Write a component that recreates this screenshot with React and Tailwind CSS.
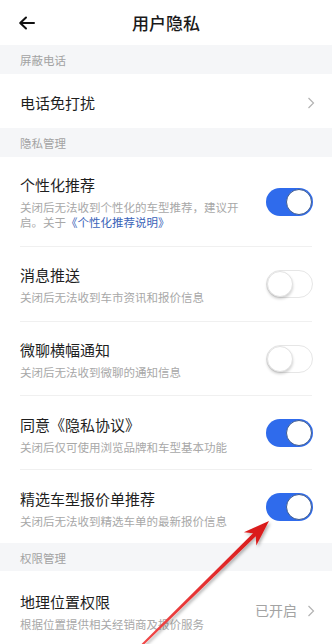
import { useState } from 'react';

const FONT = '"Noto Sans CJK SC", "Noto Sans", sans-serif';

function Toggle({ on, onClick }) {
  if (on) {
    return (
      <button
        onClick={onClick}
        className="relative w-[47px] h-[28px] rounded-full bg-[#2f6bec] shrink-0"
      >
        <span className="absolute right-[1px] top-[1px] w-[26px] h-[26px] rounded-full bg-white border border-[#3f5c8f]" />
      </button>
    );
  }
  return (
    <button
      onClick={onClick}
      className="relative w-[47px] h-[28px] rounded-full bg-white border border-[#e6e6e6] shrink-0"
    >
      <span className="absolute left-0 top-0 w-[26px] h-[26px] rounded-full bg-white border border-[#e2e2e2] shadow-[0_2px_3px_rgba(0,0,0,0.18)]" />
    </button>
  );
}

function Chevron() {
  return (
    <svg width="8" height="12" viewBox="0 0 8 12" className="shrink-0">
      <path d="M1.5 1 L6.5 6 L1.5 11" fill="none" stroke="#b3b3b3" strokeWidth="1.2" />
    </svg>
  );
}

function Section({ title, h }) {
  return (
    <div className={`${h} bg-[#f5f6f8] pl-5 pt-[8px] text-[11.5px] leading-[15px] text-[#a3a3a3]`}>
      {title}
    </div>
  );
}

function Divider() {
  return <div className="h-px mx-5 bg-[#f0f0f0]" />;
}

function SwitchRow({ title, desc, on, onToggle, h, pt = 'pt-[17px]' }) {
  return (
    <div className={`${h} flex items-center pl-5 pr-[19px]`}>
      <div className={`flex-1 self-start ${pt}`}>
        <div className="text-[15px] leading-[22px] text-[#1f1f1f]">{title}</div>
        <div className="mt-[4px] max-w-[224px] text-[11.5px] leading-[15px] text-[#a8a8a8]">
          {desc}
        </div>
      </div>
      <Toggle on={on} onClick={onToggle} />
    </div>
  );
}

export default function App() {
  const [toggles, setToggles] = useState({
    personal: true,
    push: false,
    chat: false,
    agree: true,
    quote: true,
  });

  const flip = (key) => setToggles({ ...toggles, [key]: !toggles[key] });

  return (
    <div className="relative w-[332px] h-[644px] overflow-hidden bg-white" style={{ fontFamily: FONT }}>
      {/* top bar */}
      <div className="h-[45px] grid grid-cols-[1fr_auto_1fr] items-center">
        <div className="pl-[18px]">
          <svg width="17" height="14" viewBox="0 0 17 14">
            <path d="M16 7 H2.5 M8 1.5 L2.2 7 L8 12.5" fill="none" stroke="#111" strokeWidth="2" strokeLinecap="round" strokeLinejoin="round" />
          </svg>
        </div>
        <div className="text-[17px] font-medium text-[#1a1a1a] leading-[22px]">用户隐私</div>
        <div />
      </div>

      <Section title="屏蔽电话" h="h-[29px]" />
      <div className="h-[54px] flex items-center justify-between pl-5 pr-[17px] pt-[3px]">
        <span className="text-[15px] leading-[22px] text-[#1f1f1f]">电话免打扰</span>
        <Chevron />
      </div>

      <Section title="隐私管理" h="h-[29px]" />
      <SwitchRow
        h="h-[89px]"
        title="个性化推荐"
        desc={
          <>
            <span>关闭后无法收到个性化的车型推荐，建议开</span>
            <span>启。关于</span>
            <span className="text-[#3a63b8]">《个性化推荐说明》</span>
          </>
        }
        on={toggles.personal}
        onToggle={() => flip('personal')}
      />
      <Divider />
      <SwitchRow
        h="h-[74px]"
        title="消息推送"
        desc="关闭后无法收到车市资讯和报价信息"
        on={toggles.push}
        onToggle={() => flip('push')}
      />
      <Divider />
      <SwitchRow
        h="h-[73px]"
        title="微聊横幅通知"
        desc="关闭后无法收到微聊的通知信息"
        on={toggles.chat}
        onToggle={() => flip('chat')}
      />
      <Divider />
      <SwitchRow
        h="h-[73px]"
        pt="pt-[18px]"
        title="同意《隐私协议》"
        desc="关闭后仅可使用浏览品牌和车型基本功能"
        on={toggles.agree}
        onToggle={() => flip('agree')}
      />
      <Divider />
      <SwitchRow
        h="h-[73px]"
        pt="pt-[18px]"
        title="精选车型报价单推荐"
        desc="关闭后无法收到精选车单的最新报价信息"
        on={toggles.quote}
        onToggle={() => flip('quote')}
      />

      <Section title="权限管理" h="h-[28px]" />
      <div className="h-[75px] flex items-center pl-5 pr-[17px]">
        <div className="flex-1 self-start pt-[20px]">
          <div className="text-[15px] leading-[22px] text-[#1f1f1f]">地理位置权限</div>
          <div className="mt-[4px] text-[11.5px] leading-[15px] text-[#a8a8a8]">
            根据位置提供相关经销商及报价服务
          </div>
        </div>
        <div className="flex items-center gap-[10px] mt-[4px]">
          <span className="text-[14px] text-[#a3a3a3]">已开启</span>
          <Chevron />
        </div>
      </div>

      {/* red annotation arrow */}
      <svg className="absolute left-0 top-0 pointer-events-none" width="332" height="644" viewBox="0 0 332 644">
        <defs>
          <linearGradient id="arr" x1="143" y1="644" x2="269" y2="521" gradientUnits="userSpaceOnUse">
            <stop offset="0" stopColor="#f04848" />
            <stop offset="1" stopColor="#d81818" />
          </linearGradient>
          <filter id="sh" x="-20%" y="-20%" width="140%" height="140%">
            <feDropShadow dx="1.5" dy="2" stdDeviation="1.5" floodColor="#000" floodOpacity="0.3" />
          </filter>
        </defs>
        <g filter="url(#sh)">
          <polygon
            points="269,521 256.3,545.4 255.8,536.2 141.7,646.7 140.3,645.3 253,533.2 243.9,532.3"
            fill="url(#arr)"
          />
        </g>
      </svg>
    </div>
  );
}
